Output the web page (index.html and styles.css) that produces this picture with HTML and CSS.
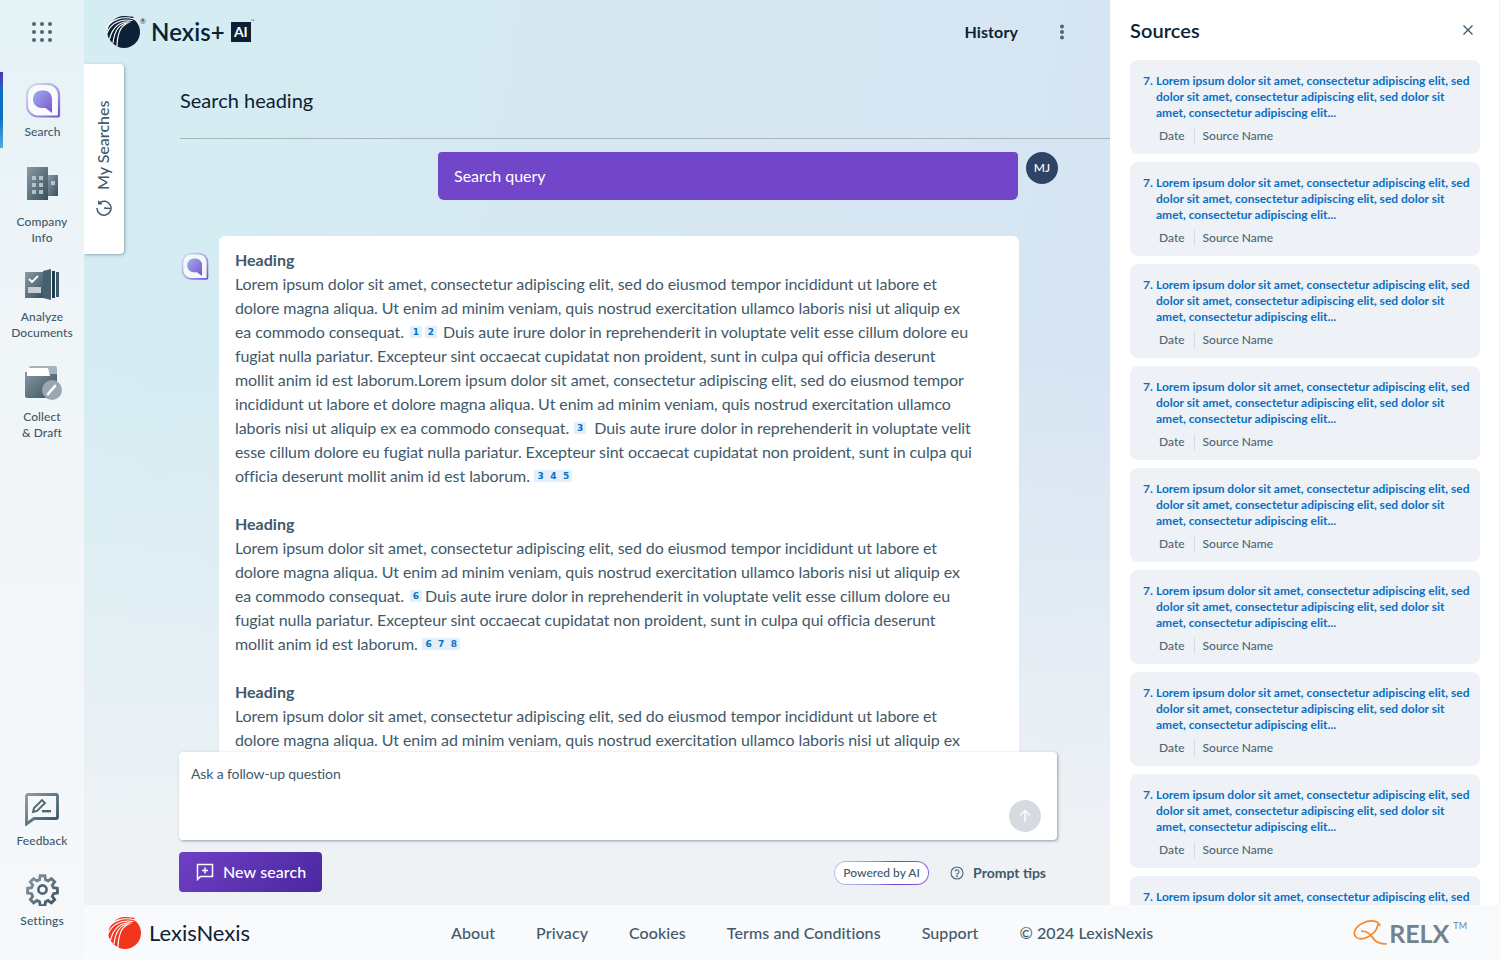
FILE: index.html
```html
<!DOCTYPE html>
<html lang="en">
<head>
<meta charset="utf-8">
<title>Nexis+ AI</title>
<link rel="stylesheet" href="styles.css">
</head>
<body>
<svg class="defs" width="0" height="0" aria-hidden="true">
  <defs>
    <linearGradient id="bubbleRing" x1="0" y1="0" x2="1" y2="1"><stop offset="0" stop-color="#cfe3f2"/><stop offset=".5" stop-color="#b3a6e6"/><stop offset="1" stop-color="#7a4fd0"/></linearGradient>
    <linearGradient id="bubbleFill" x1="0" y1="0" x2="1" y2="1"><stop offset="0" stop-color="#97b0ec"/><stop offset="1" stop-color="#8353d0"/></linearGradient>
    <linearGradient id="slate" x1="0" y1="0" x2="1" y2="1"><stop offset="0" stop-color="#8b9aa4"/><stop offset="1" stop-color="#36505f"/></linearGradient>
    <symbol id="bubble" viewBox="0 0 36 36">
      <path d="M13 2h10a11 11 0 0 1 11 11v20a1.500 1.500 0 0 1-1.500 1.500H13A11 11 0 0 1 2 23.500V13A11 11 0 0 1 13 2z" fill="#fff" fill-opacity=".7" stroke="url(#bubbleRing)" stroke-width="2.200"/>
      <path d="M16 8.500h3a8 8 0 0 1 8 8v14.500l-6.500-5H16a8.500 8.500 0 0 1-8-8.500A8.500 8.500 0 0 1 16 8.500z" fill="url(#bubbleFill)"/>
    </symbol>
    <symbol id="feather" viewBox="0 0 34 34">
      <circle cx="18" cy="17" r="16"/>
      <path d="M2 14C4 6 13 0 28 2L22 8C14 7 7 11 5 26 1 22 1 18 2 14z"/>
      <g fill="none" stroke="#fff" stroke-linecap="round" stroke-width="1.200">
        <path d="M28 4C16 .5 5 5 .5 13"/>
        <path d="M26 5.500C15 3.500 5 8 1 18"/>
        <path d="M24 7C15 6 7 11 3.500 24"/>
        <path d="M22 8C14 8.500 8.500 15 7 28"/>
        <path d="M20 9C14.500 11.500 11.500 18 11 31"/>
      </g>
    </symbol>
  </defs>
</svg>

<div class="app">
  <nav class="sidebar">
    <div class="grid-dots">
      <svg width="22" height="22" viewBox="0 0 22 22" fill="#4f6573"><circle cx="3" cy="3" r="2"/><circle cx="11" cy="3" r="2"/><circle cx="19" cy="3" r="2"/><circle cx="3" cy="11" r="2"/><circle cx="11" cy="11" r="2"/><circle cx="19" cy="11" r="2"/><circle cx="3" cy="19" r="2"/><circle cx="11" cy="19" r="2"/><circle cx="19" cy="19" r="2"/></svg>
    </div>
    <div class="nav-top">
      <a class="nav-item nav-search is-active">
        <svg class="nav-icon" width="36" height="36"><use href="#bubble"/></svg>
        <span>Search</span>
      </a>
      <a class="nav-item nav-company">
        <svg class="nav-icon" width="31" height="33" viewBox="0 0 31 33">
          <rect x="0" y="0" width="21" height="33" fill="url(#slate)"/>
          <rect x="21" y="8" width="10" height="21" fill="url(#slate)"/>
          <g fill="#b6c2c9"><rect x="5" y="9" width="4" height="4"/><rect x="12" y="9" width="4" height="4"/><rect x="5" y="16" width="4" height="4"/><rect x="12" y="16" width="4" height="4"/><rect x="5" y="23" width="4" height="4"/><rect x="12" y="23" width="4" height="4"/><rect x="24" y="14" width="4" height="4"/></g>
        </svg>
        <span>Company<br>Info</span>
      </a>
      <a class="nav-item nav-analyze">
        <svg class="nav-icon" width="34" height="32" viewBox="0 0 34 32">
          <rect x="0" y="3" width="18" height="26" fill="url(#slate)"/>
          <path d="M4 10l3 3 6-6" fill="none" stroke="#fff" stroke-width="1.800"/>
          <rect x="3" y="18" width="13" height="6" fill="#c5ced4"/>
          <path d="M18 2l8-2v31l-8-2z" fill="#47606f"/>
          <rect x="27" y="2" width="3" height="27" fill="#1f3a4f"/>
          <rect x="31" y="3" width="3" height="25" fill="#3d5869"/>
        </svg>
        <span>Analyze<br>Documents</span>
      </a>
      <a class="nav-item nav-collect">
        <svg class="nav-icon" width="38" height="36" viewBox="0 0 38 36">
          <path d="M7 2h24a2 2 0 0 1 2 2v6H5V4a2 2 0 0 1 2-2z" fill="#a8b4bc"/>
          <path d="M1 8l22-2 2 4h8v24H3a2 2 0 0 1-2-2V8z" fill="url(#slate)"/>
          <path d="M3 4h21l2 8H3z" fill="#fff"/>
          <circle cx="28" cy="26" r="10" fill="#9aa7b0"/>
          <path d="M24 30l7-8" stroke="#fff" stroke-width="2.600" stroke-linecap="round"/>
        </svg>
        <span>Collect<br>&amp; Draft</span>
      </a>
    </div>
    <div class="nav-bottom">
      <a class="nav-item nav-feedback">
        <svg class="nav-icon" width="34" height="33" viewBox="0 0 34 33">
          <path d="M3 1.500h28a1.500 1.500 0 0 1 1.500 1.500v21a1.500 1.500 0 0 1-1.500 1.500H9L1.500 31V3A1.500 1.500 0 0 1 3 1.500z" fill="none" stroke="url(#slate)" stroke-width="2.800"/>
          <path d="M8 19l1-4 8-8 3 3-8 8z" fill="none" stroke="#4f6573" stroke-width="1.900"/>
          <rect x="17" y="17" width="9" height="2.400" fill="#4f6573"/>
        </svg>
        <span>Feedback</span>
      </a>
      <a class="nav-item nav-settings">
        <svg class="nav-icon" width="33" height="33" viewBox="0 0 24 24">
          <path d="M10.200 1.500h3.600l.5 3 2 .9 2.500-1.800 2.500 2.500-1.800 2.500.9 2 3 .5v3.600l-3 .5-.9 2 1.800 2.500-2.500 2.500-2.500-1.800-2 .9-.5 3h-3.600l-.5-3-2-.9-2.500 1.800-2.500-2.500 1.800-2.500-.9-2-3-.5v-3.600l3-.5.9-2-1.800-2.500 2.500-2.500 2.500 1.800 2-.9z" transform="translate(.6 .6) scale(.95)" fill="none" stroke="url(#slate)" stroke-width="2.200"/>
          <circle cx="12" cy="12" r="3" fill="none" stroke="#4f6573" stroke-width="1.900"/>
        </svg>
        <span>Settings</span>
      </a>
    </div>
  </nav>

  <div class="workspace">
    <div class="upper">
      <main class="main">
        <header class="topbar">
          <div class="brand">
            <svg class="feather dark" width="34" height="34"><use href="#feather"/></svg>
            <span class="tm-dot">®</span>
            <span class="brand-name">Nexis+</span>
            <span class="ai-badge">AI</span>
            <span class="tm-small">™</span>
          </div>
          <div class="top-actions">
            <a class="history">History</a>
            <svg class="kebab" width="6" height="16" viewBox="0 0 6 16" fill="#4f6573"><circle cx="3" cy="2.500" r="2"/><circle cx="3" cy="8" r="2"/><circle cx="3" cy="13.500" r="2"/></svg>
          </div>
        </header>

        <aside class="my-searches">
          <div class="my-searches-inner">
            <svg class="history-icon" width="16" height="16" viewBox="0 0 16 16" fill="none" stroke="#41596a" stroke-width="1.500"><path d="M3.400 2.900A7 7 0 1 1 1 8"/><path d="M2.800 .8v3h3"/><path d="M8 8l6 .5"/></svg>
            <span class="my-searches-label">My Searches</span>
          </div>
        </aside>

        <div class="center">
          <h1 class="search-heading">Search heading</h1>
          <div class="conversation">
            <div class="query-row">
              <div class="query">Search query</div>
              <div class="avatar">MJ</div>
            </div>
            <div class="answer-row">
              <svg class="answer-icon" width="28" height="28"><use href="#bubble"/></svg>
              <article class="answer">
                <section class="answer-block">
                  <h2>Heading</h2>
                  <p>Lorem ipsum dolor sit amet, consectetur adipiscing elit, sed do eiusmod tempor incididunt ut labore et<br>
                  dolore magna aliqua. Ut enim ad minim veniam, quis nostrud exercitation ullamco laboris nisi ut aliquip ex<br>
                  ea commodo consequat. <span class="refs"><b>1</b><b>2</b></span> Duis aute irure dolor in reprehenderit in voluptate velit esse cillum dolore eu<br>
                  fugiat nulla pariatur. Excepteur sint occaecat cupidatat non proident, sunt in culpa qui officia deserunt<br>
                  mollit anim id est laborum.Lorem ipsum dolor sit amet, consectetur adipiscing elit, sed do eiusmod tempor<br>
                  incididunt ut labore et dolore magna aliqua. Ut enim ad minim veniam, quis nostrud exercitation ullamco<br>
                  laboris nisi ut aliquip ex ea commodo consequat. <span class="refs wide"><b>3</b></span> Duis aute irure dolor in reprehenderit in voluptate velit<br>
                  esse cillum dolore eu fugiat nulla pariatur. Excepteur sint occaecat cupidatat non proident, sunt in culpa qui<br>
                  officia deserunt mollit anim id est laborum. <span class="refs tight"><b>3</b><b>4</b><b>5</b></span></p>
                </section>
                <section class="answer-block">
                  <h2>Heading</h2>
                  <p>Lorem ipsum dolor sit amet, consectetur adipiscing elit, sed do eiusmod tempor incididunt ut labore et<br>
                  dolore magna aliqua. Ut enim ad minim veniam, quis nostrud exercitation ullamco laboris nisi ut aliquip ex<br>
                  ea commodo consequat. <span class="refs snug"><b>6</b></span> Duis aute irure dolor in reprehenderit in voluptate velit esse cillum dolore eu<br>
                  fugiat nulla pariatur. Excepteur sint occaecat cupidatat non proident, sunt in culpa qui officia deserunt<br>
                  mollit anim id est laborum. <span class="refs tight"><b>6</b><b>7</b><b>8</b></span></p>
                </section>
                <section class="answer-block">
                  <h2>Heading</h2>
                  <p>Lorem ipsum dolor sit amet, consectetur adipiscing elit, sed do eiusmod tempor incididunt ut labore et<br>
                  dolore magna aliqua. Ut enim ad minim veniam, quis nostrud exercitation ullamco laboris nisi ut aliquip ex</p>
                </section>
              </article>
            </div>
          </div>
          <div class="composer">
            <div class="composer-label">Ask a follow-up question</div>
            <button class="send" aria-label="Send">
              <svg width="14" height="14" viewBox="0 0 14 14" fill="none" stroke="#fff" stroke-width="1.400"><path d="M7 13V1.500M2 6.500l5-5 5 5"/></svg>
            </button>
          </div>
          <div class="actions">
            <button class="new-search">
              <svg width="18" height="18" viewBox="0 0 18 18" fill="none" stroke="#fff" stroke-width="1.500"><path d="M1.500 1.500h15v12H4.500l-3 3z"/><path d="M9 4.500v6M6 7.500h6"/></svg>
              <span>New search</span>
            </button>
            <div class="actions-right">
              <span class="powered">Powered by AI</span>
              <a class="tips">
                <svg width="14" height="14" viewBox="0 0 14 14" fill="none" stroke="#4f6573" stroke-width="1.100"><circle cx="7" cy="7" r="6"/><path d="M5.200 5.400A1.900 1.900 0 1 1 7 7.700v.8"/><circle cx="7" cy="10.300" r=".4" fill="#4f6573"/></svg>
                <span>Prompt tips</span>
              </a>
            </div>
          </div>
        </div>
      </main>

      <aside class="sources">
        <header class="sources-head">
          <h2>Sources</h2>
          <svg width="12" height="12" viewBox="0 0 12 12" stroke="#41596a" stroke-width="1.400"><path d="M1.500 1.500l9 9M10.500 1.500l-9 9"/></svg>
        </header>
        <div class="source-list">
          <div class="source"><div class="source-title"><span class="num">7.</span><span>Lorem ipsum dolor sit amet, consectetur adipiscing elit, sed dolor sit amet, consectetur adipiscing elit, sed dolor sit amet, consectetur adipiscing elit...</span></div><div class="source-meta"><span>Date</span><span>Source Name</span></div></div>
          <div class="source"><div class="source-title"><span class="num">7.</span><span>Lorem ipsum dolor sit amet, consectetur adipiscing elit, sed dolor sit amet, consectetur adipiscing elit, sed dolor sit amet, consectetur adipiscing elit...</span></div><div class="source-meta"><span>Date</span><span>Source Name</span></div></div>
          <div class="source"><div class="source-title"><span class="num">7.</span><span>Lorem ipsum dolor sit amet, consectetur adipiscing elit, sed dolor sit amet, consectetur adipiscing elit, sed dolor sit amet, consectetur adipiscing elit...</span></div><div class="source-meta"><span>Date</span><span>Source Name</span></div></div>
          <div class="source"><div class="source-title"><span class="num">7.</span><span>Lorem ipsum dolor sit amet, consectetur adipiscing elit, sed dolor sit amet, consectetur adipiscing elit, sed dolor sit amet, consectetur adipiscing elit...</span></div><div class="source-meta"><span>Date</span><span>Source Name</span></div></div>
          <div class="source"><div class="source-title"><span class="num">7.</span><span>Lorem ipsum dolor sit amet, consectetur adipiscing elit, sed dolor sit amet, consectetur adipiscing elit, sed dolor sit amet, consectetur adipiscing elit...</span></div><div class="source-meta"><span>Date</span><span>Source Name</span></div></div>
          <div class="source"><div class="source-title"><span class="num">7.</span><span>Lorem ipsum dolor sit amet, consectetur adipiscing elit, sed dolor sit amet, consectetur adipiscing elit, sed dolor sit amet, consectetur adipiscing elit...</span></div><div class="source-meta"><span>Date</span><span>Source Name</span></div></div>
          <div class="source"><div class="source-title"><span class="num">7.</span><span>Lorem ipsum dolor sit amet, consectetur adipiscing elit, sed dolor sit amet, consectetur adipiscing elit, sed dolor sit amet, consectetur adipiscing elit...</span></div><div class="source-meta"><span>Date</span><span>Source Name</span></div></div>
          <div class="source"><div class="source-title"><span class="num">7.</span><span>Lorem ipsum dolor sit amet, consectetur adipiscing elit, sed dolor sit amet, consectetur adipiscing elit, sed dolor sit amet, consectetur adipiscing elit...</span></div><div class="source-meta"><span>Date</span><span>Source Name</span></div></div>
          <div class="source"><div class="source-title"><span class="num">7.</span><span>Lorem ipsum dolor sit amet, consectetur adipiscing elit, sed</span></div></div>
        </div>
      </aside>
    </div>

    <footer class="footer">
      <div class="footer-brand">
        <svg class="feather red" width="34" height="34"><use href="#feather"/></svg>
        <span>LexisNexis</span>
      </div>
      <div class="footer-links">
        <a>About</a><a>Privacy</a><a>Cookies</a><a>Terms and Conditions</a><a>Support</a><a>© 2024 LexisNexis</a>
      </div>
      <div class="relx">
        <svg width="34" height="26" viewBox="0 0 34 26" fill="none" stroke="#f58a2e" stroke-width="1.700"><path d="M27 6C26 1 18-1 10 3 3 6-1 13 3 17c4 4 14 1 20-7 1-2 2-4 2-6"/><path d="M8 11c6 0 9 2 12 7 2 4 6 6 14 6"/></svg>
        <span class="relx-name">RELX</span>
        <span class="relx-tm">TM</span>
      </div>
    </footer>
  </div>
</div>
</body>
</html>
```

FILE: styles.css
```css
* { box-sizing: border-box; }
html, body { margin: 0; height: 100%; }
body {
  width: 1500px;
  height: 960px;
  overflow: hidden;
  font-family: Lato, "Liberation Sans", sans-serif;
  color: #41596a;
}
.defs { position: absolute; }
a { text-decoration: none; color: inherit; }
h1, h2, p { margin: 0; font-weight: 400; }
button { font: inherit; border: 0; padding: 0; }

.app { display: flex; height: 960px; }

/* left rail */
.sidebar {
  width: 84px;
  flex: none;
  display: flex;
  flex-direction: column;
  background: linear-gradient(180deg, #e4f2f6 0%, #f0f5f8 35%, #f6f8fa 100%);
}
.grid-dots { height: 64px; padding: 21px 0 0 31px; flex: none; }
.nav-top { display: flex; flex-direction: column; flex: 1; padding-top: 8px; }
.nav-bottom { display: flex; flex-direction: column; padding-bottom: 31px; }
.nav-item {
  position: relative;
  display: flex;
  flex-direction: column;
  align-items: center;
  font-size: 12px;
  line-height: 16px;
  letter-spacing: .1px;
  text-align: center;
  font-weight: 500;
  color: #41596a;
}
.nav-item span { display: block; }
.nav-icon { display: block; }
.nav-search { height: 76px; padding-top: 10px; padding-left: 1px; }
.nav-search span { margin-top: 6px; }
.nav-search.is-active::before {
  content: "";
  position: absolute;
  left: 0;
  top: 0;
  width: 3px;
  height: 76px;
  background: linear-gradient(180deg, #5d2db5 0, #0a6fc2 25%, #0a70c4 60%, #5aa9de 100%);
}
.nav-company { padding-top: 19px; height: 105px; }
.nav-company span { margin-top: 14px; }
.nav-analyze { height: 95px; padding-top: 16px; }
.nav-analyze span { margin-top: 8px; }
.nav-collect { padding-top: 16px; padding-left: 2px; }
.nav-collect span { margin: 9px 0 0 -2px; }
.nav-feedback { height: 81px; padding-top: 1px; }
.nav-feedback span { margin-top: 7px; }
.nav-settings span { margin-top: 7px; }

/* workspace */
.workspace { flex: 1; display: flex; flex-direction: column; min-width: 0; }
.upper { flex: 1; display: flex; min-height: 0; overflow: hidden; }

.main {
  position: relative;
  flex: 1;
  min-width: 0;
  display: flex;
  flex-direction: column;
  background:
    linear-gradient(180deg, rgba(239, 242, 245, 0) 40%, #eff2f5 95%),
    linear-gradient(100deg, #d4edf2 0%, #d6e9f2 40%, #d7e4f3 100%);
}
.topbar {
  height: 64px;
  flex: none;
  display: flex;
  align-items: center;
  justify-content: space-between;
  padding: 0 45px 0 22px;
}
.brand { display: flex; align-items: center; color: #0c2136; position: relative; }
.feather { display: block; flex: none; }
.feather.dark { fill: #0c2136; }
.feather.red { fill: #f2351f; }
.tm-dot { font-size: 7px; align-self: flex-start; margin: 2px 0 0 0; width: 11px; }
.brand-name { font-size: 24px; font-weight: 600; line-height: 30px; letter-spacing: .1px; }
.ai-badge {
  margin-left: 6px;
  width: 20px;
  height: 20px;
  background: #0c2136;
  color: #fff;
  font-size: 14px;
  font-weight: 700;
  text-align: center;
  line-height: 20px;
}
.tm-small { font-size: 5px; align-self: flex-start; margin-top: 3px; color: #4f6573; }
.top-actions { display: flex; align-items: center; gap: 41px; }
.history { font-size: 16px; font-weight: 700; color: #0c2136; letter-spacing: .1px; margin-bottom: 2px; }
.kebab { display: block; }

.my-searches {
  position: absolute;
  left: 0;
  top: 64px;
  width: 40px;
  height: 190px;
  background: #fff;
  border-radius: 0 4px 4px 0;
  box-shadow: 1px 1px 3px rgba(60, 80, 100, .45);
  z-index: 3;
}
.my-searches-inner {
  position: absolute;
  left: 0;
  top: 0;
  width: 190px;
  height: 40px;
  transform-origin: 0 0;
  transform: translateY(190px) rotate(-90deg);
  display: flex;
  align-items: center;
  gap: 10px;
  padding-left: 38px;
  font-size: 16px;
  font-weight: 500;
  color: #41596a;
}
.history-icon { transform: rotate(90deg); flex: none; }
.my-searches-label { margin-bottom: 3px; }

.center {
  flex: 1;
  min-height: 0;
  display: flex;
  flex-direction: column;
  padding-left: 96px;
}
.search-heading {
  height: 75px;
  flex: none;
  padding-top: 22px;
  font-size: 20px;
  line-height: 28px;
  color: #0c2136;
  border-bottom: 1px solid #a9b4bb;
}
.conversation {
  flex: 1;
  min-height: 0;
  overflow: hidden;
  padding-top: 13px;
}
.query-row { display: flex; align-items: flex-start; gap: 8px; padding-left: 258px; }
.query {
  width: 580px;
  height: 48px;
  border-radius: 4px 4px 6px 6px;
  background: #7246c8;
  color: #fff;
  font-size: 16px;
  line-height: 48px;
  padding-left: 16px;
}
.avatar {
  width: 32px;
  height: 32px;
  border-radius: 50%;
  background: #2d4465;
  color: #fff;
  font-size: 12px;
  font-weight: 500;
  line-height: 32px;
  text-align: center;
}
.answer-row { display: flex; align-items: flex-start; margin-top: 36px; }
.answer-icon { margin: 16px 0 0 1px; flex: none; }
.answer {
  margin-left: 10px;
  width: 800px;
  flex: none;
  background: #fff;
  border-radius: 6px 6px 0 0;
  padding: 12px 16px 16px;
  font-size: 16px;
  line-height: 24px;
  color: #41596a;
}
.answer-block { margin-bottom: 24px; }
.answer h2 { font-size: 16px; line-height: 24px; font-weight: 700; color: #41596a; }
.answer p { white-space: nowrap; letter-spacing: -.085px; }

.refs {
  display: inline-flex;
  gap: 3px;
  margin: 0 2px 0 2px;
  vertical-align: 3px;
  line-height: 12px;
}
.refs.wide { margin: 0 4px 0 1px; }
.refs.snug { margin: 0 -1px 0 2px; }
.refs b {
  display: block;
  width: 12px;
  height: 12px;
  font-size: 9px;
  text-align: center;
  color: #0a6fc2;
  background: #e1f0fa;
  font-family: "DejaVu Sans", sans-serif;
  font-weight: 700;
  letter-spacing: 0;
}
.refs.tight { gap: 0; margin: 0 0 0 .5px; }
.refs.tight b { width: 12.700px; }

.composer {
  position: relative;
  flex: none;
  width: 878px;
  height: 88px;
  margin-left: -1px;
  background: #fff;
  border-radius: 4px;
  box-shadow: 1px 1px 3px rgba(60, 80, 100, .5);
  padding: 14px 12px;
  font-size: 14px;
  line-height: 16px;
  letter-spacing: -.12px;
  color: #41596a;
  z-index: 2;
}
.send {
  position: absolute;
  right: 16px;
  bottom: 8px;
  width: 32px;
  height: 32px;
  border-radius: 50%;
  background: #d5dbe1;
  display: flex;
  align-items: center;
  justify-content: center;
}
.actions {
  flex: none;
  width: 878px;
  height: 65px;
  margin-left: -1px;
  padding-top: 12px;
  display: flex;
  justify-content: space-between;
  align-items: flex-start;
}
.new-search {
  width: 143px;
  height: 40px;
  border-radius: 4px;
  background: linear-gradient(135deg, #6f3fc4 0%, #4a28a0 100%);
  color: #fff;
  font-size: 16px;
  font-weight: 500;
  display: flex;
  align-items: center;
  gap: 9px;
  padding: 0 0 0 17px;
}
.new-search span { margin-bottom: 2px; letter-spacing: .1px; }
.new-search svg { display: block; }
.actions-right { display: flex; align-items: center; gap: 21px; padding: 9px 11px 0 0; }
.powered {
  height: 24px;
  width: 95px;
  text-align: center;
  border-radius: 12px;
  border: 1px solid transparent;
  background: linear-gradient(#fff, #fff) padding-box, linear-gradient(90deg, #b4c6ee 0%, #9a86de 45%, #6b3fd0 65%, #8a6ad8 100%) border-box;
  font-size: 12px;
  font-weight: 500;
  line-height: 22px;
  color: #41596a;
}
.tips { display: flex; align-items: center; gap: 9px; font-size: 14px; font-weight: 700; color: #41596a; }
.tips span { margin-bottom: 2px; }
.tips svg { display: block; }

/* sources */
.sources {
  width: 390px;
  flex: none;
  background: #fff;
  border-right: 1px solid #eef1f5;
  padding: 0 19px 0 20px;
  overflow: hidden;
  display: flex;
  flex-direction: column;
}
.sources-head {
  height: 60px;
  flex: none;
  display: flex;
  justify-content: space-between;
  align-items: center;
  padding-right: 6px;
}
.sources-head h2 { font-size: 20px; font-weight: 600; color: #0c2136; line-height: 60px; letter-spacing: .05px; }
.source-list { display: flex; flex-direction: column; gap: 8px; }
.source {
  flex: none;
  height: 94px;
  background: #eef2f6;
  border-radius: 8px;
  padding: 13px 9px 0 13px;
}
.source-title {
  display: flex;
  font-size: 12px;
  line-height: 16px;
  font-weight: 700;
  color: #0a6fc2;
}
.num { width: 13px; flex: none; }
.source-meta {
  display: flex;
  font-size: 12px;
  line-height: 16px;
  font-weight: 500;
  color: #4f6573;
  padding: 7px 0 0 16px;
}
.source-meta span:first-child { padding-right: 9px; border-right: 1px solid #d5dbe1; margin-right: 8px; }

/* footer */
.footer {
  height: 55px;
  flex: none;
  display: flex;
  align-items: center;
  padding: 0 33px 0 23px;
  background: #f9fafc;
  position: relative;
  z-index: 4;
}
.footer-brand { display: flex; align-items: center; gap: 8px; width: 344px; font-size: 22px; color: #0c2136; }
.footer-links { display: flex; gap: 41px; font-size: 16px; font-weight: 500; letter-spacing: .08px; color: #41596a; flex: 1; }
.relx { display: flex; align-items: center; color: #73838e; }
.relx-name { font-size: 25px; font-weight: 700; margin-left: 2px; line-height: 30px; }
.relx-tm { font-size: 9px; align-self: flex-start; margin: 2px 0 0 4px; }
```
